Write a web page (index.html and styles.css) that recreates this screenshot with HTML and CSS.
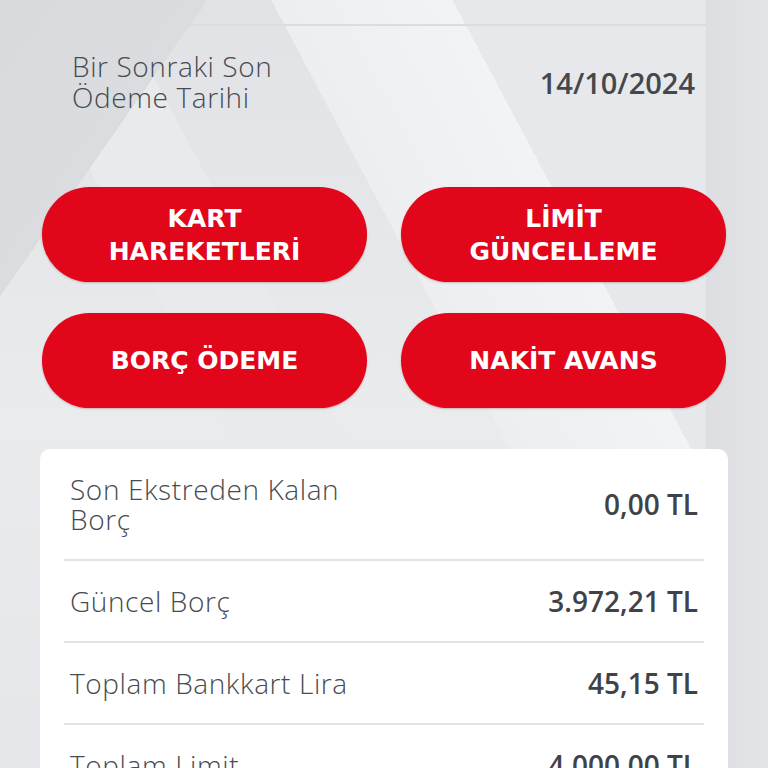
FILE: index.html
```html
<!DOCTYPE html>
<html>
<head>
    <title>Kart Detayı</title>
    <link rel="stylesheet" href="styles.css">
</head>
<body>
    <div class="screen">
        <div class="summary">
            <div class="summary-label">Bir Sonraki Son<br>Ödeme Tarihi</div>
            <div class="summary-value">14/10/2024</div>
        </div>

        <div class="actions">
            <button class="action">KART<br>HAREKETLERİ</button>
            <button class="action">LİMİT<br>GÜNCELLEME</button>
            <button class="action">BORÇ ÖDEME</button>
            <button class="action">NAKİT AVANS</button>
        </div>

        <div class="card">
            <div class="row">
                <div class="row-label">Son Ekstreden Kalan Borç</div>
                <div class="row-value">0,00 TL</div>
            </div>
            <div class="row">
                <div class="row-label">Güncel Borç</div>
                <div class="row-value">3.972,21 TL</div>
            </div>
            <div class="row">
                <div class="row-label">Toplam Bankkart Lira</div>
                <div class="row-value">45,15 TL</div>
            </div>
            <div class="row">
                <div class="row-label">Toplam Limit</div>
                <div class="row-value">4.000,00 TL</div>
            </div>
        </div>
    </div>
</body>
</html>
```

FILE: styles.css
```css
html, body {
    margin: 0;
    padding: 0;
}
body {
    font-family: "Open Sans", "Liberation Sans", sans-serif;
    color: #4e5358;
    width: 768px;
    height: 768px;
    overflow: hidden;
    background-color: #e4e6e9;
    background-image:
        linear-gradient(90deg, transparent 706px, #dcdee1 706px, #e2e4e7 768px),
        linear-gradient(125deg, #d8dadd 0, #dadcdf 170px, transparent 170px),
        linear-gradient(62deg, transparent 0, transparent 600px, #eceef0 600px, #f2f3f5 760px, #e6e8eb 760px),
        linear-gradient(62deg, transparent 0, transparent 360px, #e8eaec 360px, #e8eaec 460px, transparent 460px),
        linear-gradient(180deg, #e0e2e5 0, #e9ebed 55%, #e4e6e9 100%);
    background-repeat: no-repeat;
}
.screen {
    padding-top: 24px;
}

/* top summary */
.summary {
    margin: 0 62px 0 40px;
    border-top: 2px solid #dadcdf;
    padding: 25px 11px 0 32px;
    display: flex;
    align-items: center;
    justify-content: space-between;
}
.summary-label {
    font-size: 28px;
    font-weight: 300;
    letter-spacing: 0.6px;
    line-height: 31px;
    color: #464b51;
}
.summary-value {
    font-size: 29px;
    font-weight: 600;
    color: #44484d;
}

/* red buttons */
.actions {
    margin: 74px 42px 0 42px;
    display: grid;
    grid-template-columns: 1fr 1fr;
    column-gap: 34px;
    row-gap: 31px;
}
.action {
    height: 95px;
    border: none;
    border-radius: 48px;
    background-color: #e2061a;
    color: white;
    font-family: "DejaVu Sans", "Open Sans", sans-serif;
    font-size: 25px;
    font-weight: bold;
    line-height: 33px;
    padding: 0 10px;
    box-shadow: 0 1px 2px rgba(120, 0, 0, 0.25);
}

/* info card */
.card {
    margin: 41px 40px 0 40px;
    background-color: white;
    border-radius: 10px;
    padding: 0 24px;
}
.row {
    display: flex;
    align-items: center;
    justify-content: space-between;
    padding: 25px 6px;
    border-bottom: 2px solid #e3e4e6;
}
.row-label {
    max-width: 320px;
    font-size: 28px;
    font-weight: 300;
    letter-spacing: 0.6px;
    line-height: 30px;
    color: #464b51;
}
.row-value {
    font-size: 28px;
    font-weight: 600;
    line-height: 30px;
    color: #3f4348;
}
```
